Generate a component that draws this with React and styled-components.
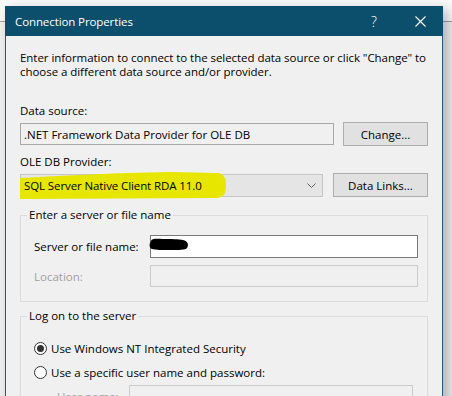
import styled, { createGlobalStyle } from "styled-components"

const GlobalStyle = createGlobalStyle`
    html, body {
        margin: 0;
        padding: 0;
    }
    body {
        font-family: "Open Sans", "Noto Sans", sans-serif;
        font-size: 11.5px;
        color: #000;
    }
`

const App = () => {
    return (
        <>
            <GlobalStyle />
            <Desktop>
                <Window>
                    <TitleBar>
                        <Title>Connection Properties</Title>
                        <CaptionButton>
                            <HelpGlyph>?</HelpGlyph>
                        </CaptionButton>
                        <CaptionButton>
                            <svg width="11" height="11" viewBox="0 0 11 11">
                                <path d="M0.5 0.5 L10.5 10.5 M10.5 0.5 L0.5 10.5" stroke="#fff" strokeWidth="1.1" />
                            </svg>
                        </CaptionButton>
                    </TitleBar>
                    <Content>
                        <Intro>
                            Enter information to connect to the selected data source or click "Change" to
                            <br />
                            choose a different data source and/or provider.
                        </Intro>

                        <FieldLabel $top={25}>Data source:</FieldLabel>
                        <Row $gap={9}>
                            <ReadOnlyBox>.NET Framework Data Provider for OLE DB</ReadOnlyBox>
                            <Button $width={85}>Change...</Button>
                        </Row>

                        <FieldLabel $top={9}>OLE DB Provider:</FieldLabel>
                        <Row $gap={10}>
                            <Select>
                                <Highlight viewBox="0 0 206 28" preserveAspectRatio="none">
                                    <path d="M0 6 C40 4 90 1 150 0 L198 1 C205 2 206 8 206 14 C206 22 203 26 196 26 L0 27 Z" fill="#e6e600" />
                                </Highlight>
                                <SelectText>SQL Server Native Client RDA 11.0</SelectText>
                                <svg width="9" height="5" viewBox="0 0 9 5">
                                    <path d="M0.5 0.5 L4.5 4.5 L8.5 0.5" stroke="#606060" fill="none" strokeWidth="1" />
                                </svg>
                            </Select>
                            <Button $width={95}>Data Links...</Button>
                        </Row>

                        <Group $top={11} $padTop={13} $padBottom={14}>
                            <Legend>Enter a server or file name</Legend>
                            <FormGrid>
                                <GridLabel>Server or file name:</GridLabel>
                                <TextBox>
                                    <Redaction viewBox="0 0 40 13">
                                        <path d="M2 3 C3 0 8 1 14 1 C22 1 30 1 34 2 C39 3 40 7 38 10 C36 12 30 12 22 12 C14 12 6 12 3 11 C0 10 0 6 2 3 Z" fill="#000" />
                                    </Redaction>
                                </TextBox>
                                <GridLabel $disabled>Location:</GridLabel>
                                <TextBox $disabled />
                            </FormGrid>
                        </Group>

                        <Group $top={7} $padTop={13} $padBottom={13}>
                            <Legend>Log on to the server</Legend>
                            <RadioList>
                                <RadioRow>
                                    <Radio $checked />
                                    Use Windows NT Integrated Security
                                </RadioRow>
                                <RadioRow>
                                    <Radio />
                                    Use a specific user name and password:
                                </RadioRow>
                                <UserRow>
                                    <GridLabel $disabled>User name:</GridLabel>
                                    <TextBox $disabled />
                                </UserRow>
                            </RadioList>
                        </Group>
                    </Content>
                </Window>
            </Desktop>
        </>
    )
}

export default App

const Desktop = styled.div`
    width: 452px;
    height: 396px;
    overflow: hidden;
    box-sizing: border-box;
    padding: 6px 0 0 5px;
    background: linear-gradient(to bottom, #fafafa 0, #fafafa 21px, #a0a0a0 21px, #a0a0a0 22px, #f0f0f0 22px);
`

const Window = styled.div`
    width: 438px;
    min-height: 440px;
    box-sizing: border-box;
    border: 1px solid #1d5d86;
    border-top: none;
    background: #f0f0f0;
    box-shadow: 5px 4px 12px rgba(0, 0, 0, 0.28);
`

const TitleBar = styled.div`
    height: 30px;
    margin: 0 -1px;
    background: #0b4f6c;
    display: flex;
    align-items: center;
    color: #fff;
`

const Title = styled.div`
    flex: 1;
    padding-left: 10px;
    font-size: 11.5px;
    letter-spacing: -0.1px;
`

const CaptionButton = styled.div`
    width: 46px;
    height: 30px;
    display: flex;
    align-items: center;
    justify-content: center;
`

const HelpGlyph = styled.span`
    font-size: 14px;
    font-weight: 300;
`

const Content = styled.div`
    padding: 15px 14px 0 14px;
    display: flex;
    flex-direction: column;
`

const Intro = styled.div`
    line-height: 14px;
    white-space: nowrap;
    letter-spacing: -0.05px;
`

const FieldLabel = styled.div`
    line-height: 14px;
    margin-top: ${p => p.$top}px;
    margin-bottom: 4px;
`

const Row = styled.div`
    display: flex;
    align-items: center;
    gap: ${p => p.$gap}px;
    height: 24px;
`

const ReadOnlyBox = styled.div`
    flex: 1;
    height: 22px;
    box-sizing: border-box;
    border: 1px solid #a8a8a8;
    padding-left: 3px;
    display: flex;
    align-items: center;
    white-space: nowrap;
`

const Button = styled.div`
    width: ${p => p.$width}px;
    height: 24px;
    box-sizing: border-box;
    background: #e1e1e1;
    border: 1px solid #adadad;
    display: flex;
    align-items: center;
    justify-content: center;
`

const Select = styled.div`
    position: relative;
    flex: 1;
    height: 23px;
    box-sizing: border-box;
    background: #e5e5e5;
    border: 1px solid #c6c6c6;
    padding: 0 6px 0 3px;
    display: flex;
    align-items: center;
    justify-content: space-between;
`

const Highlight = styled.svg`
    position: absolute;
    left: -1px;
    top: -3px;
    width: 206px;
    height: 28px;
`

const SelectText = styled.span`
    position: relative;
    white-space: nowrap;
    letter-spacing: -0.1px;
`

const Group = styled.fieldset`
    margin: ${p => p.$top}px 0 0 0;
    padding: ${p => p.$padTop}px 9px ${p => p.$padBottom}px 13px;
    border: 1px solid #dcdcdc;
    min-width: 0;
`

const Legend = styled.legend`
    padding: 0 2px;
    margin-left: -7px;
    line-height: 14px;
`

const FormGrid = styled.div`
    display: grid;
    grid-template-columns: 116px 1fr;
    row-gap: 7px;
    align-items: center;
`

const GridLabel = styled.span`
    color: ${p => (p.$disabled ? "#a0a0a0" : "#000")};
    white-space: nowrap;
`

const TextBox = styled.div`
    position: relative;
    height: ${p => (p.$disabled ? 22 : 23)}px;
    box-sizing: border-box;
    background: ${p => (p.$disabled ? "#f0f0f0" : "#fff")};
    border: 1px solid ${p => (p.$disabled ? "#cccccc" : "#7a7a7a")};
`

const Redaction = styled.svg`
    position: absolute;
    left: -2px;
    top: 2px;
    width: 40px;
    height: 13px;
`

const RadioList = styled.div`
    display: flex;
    flex-direction: column;
    padding-top: 3px;
`

const RadioRow = styled.label`
    display: flex;
    align-items: center;
    gap: 4px;
    height: 18px;
    margin-bottom: 6px;
    white-space: nowrap;
`

const Radio = styled.span`
    width: 13px;
    height: 13px;
    box-sizing: border-box;
    border-radius: 50%;
    border: 1px solid #333;
    background: #fff;
    display: flex;
    align-items: center;
    justify-content: center;
    &::after {
        content: "";
        width: 7px;
        height: 7px;
        border-radius: 50%;
        background: ${p => (p.$checked ? "#333" : "transparent")};
    }
`

const UserRow = styled.div`
    display: grid;
    grid-template-columns: 72px 1fr;
    align-items: center;
    padding-left: 23px;
    margin-right: 5px;
    margin-top: -2px;
`
